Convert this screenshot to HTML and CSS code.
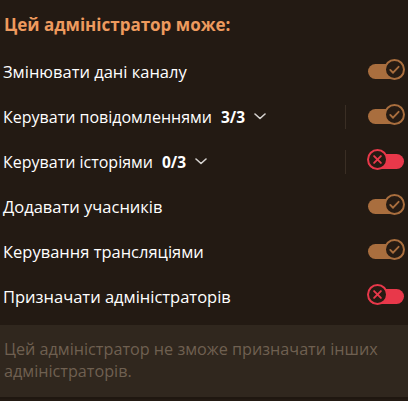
FILE: index.html
```html
<!DOCTYPE html>
<html lang="uk">
<head>
<meta charset="utf-8">
<link rel="stylesheet" href="styles.css">
</head>
<body>
<div class="panel">
  <div class="title">Цей адміністратор може:</div>
  <div class="row">
    <span class="label">Змінювати дані каналу</span>
    <span class="toggle on"><span class="knob"><svg viewBox="0 0 20 20"><path d="M5 10.5l3.3 3.3 6.5-7"/></svg></span></span>
  </div>
  <div class="row">
    <span class="label"><span class="tight">Керувати повідомленнями</span><b class="count">3/3</b><svg class="chev" viewBox="0 0 12 7"><path d="M1 1l5 4.5 5-4.5"/></svg></span>
    <span class="sep"></span>
    <span class="toggle on"><span class="knob"><svg viewBox="0 0 20 20"><path d="M5 10.5l3.3 3.3 6.5-7"/></svg></span></span>
  </div>
  <div class="row">
    <span class="label"><span class="tight">Керувати історіями</span><b class="count">0/3</b><svg class="chev" viewBox="0 0 12 7"><path d="M1 1l5 4.5 5-4.5"/></svg></span>
    <span class="sep"></span>
    <span class="toggle off"><span class="knob"><svg viewBox="0 0 20 20"><path d="M6 6l8 8M14 6l-8 8"/></svg></span></span>
  </div>
  <div class="row">
    <span class="label">Додавати учасників</span>
    <span class="toggle on"><span class="knob"><svg viewBox="0 0 20 20"><path d="M5 10.5l3.3 3.3 6.5-7"/></svg></span></span>
  </div>
  <div class="row">
    <span class="label">Керування трансляціями</span>
    <span class="toggle on"><span class="knob"><svg viewBox="0 0 20 20"><path d="M5 10.5l3.3 3.3 6.5-7"/></svg></span></span>
  </div>
  <div class="row">
    <span class="label">Призначати адміністраторів</span>
    <span class="toggle off"><span class="knob"><svg viewBox="0 0 20 20"><path d="M6 6l8 8M14 6l-8 8"/></svg></span></span>
  </div>
  <div class="note">Цей адміністратор не зможе призначати інших адміністраторів.</div>
</div>
</body>
</html>
```
FILE: styles.css
```css
html, body {
  margin: 0;
  padding: 0;
  background: #231a13;
}
body {
  width: 408px;
  height: 401px;
  overflow: hidden;
  font-family: "Open Sans", "Noto Sans", sans-serif;
  color: #ffffff;
}
.panel {
  display: flex;
  flex-direction: column;
}
.title {
  height: 49px;
  box-sizing: border-box;
  padding: 14px 0 0 4px;
  font-size: 17px;
  font-weight: 700;
  color: #ee9a5e;
  line-height: 22px;
}
.row {
  height: 45px;
  display: flex;
  align-items: center;
  padding: 0 4px 0 3px;
}
.label {
  flex: 1;
  font-size: 16.5px;
  line-height: 22px;
  display: flex;
  align-items: center;
  white-space: nowrap;
}
.tight {
  font-size: 16px;
}
.count {
  font-weight: 700;
  font-size: 15.5px;
  margin-left: 9px;
}
.chev {
  width: 12px;
  height: 7px;
  margin-left: 9px;
  fill: none;
  stroke: #d6d3d0;
  stroke-width: 1.6;
  stroke-linecap: round;
  stroke-linejoin: round;
}
.sep {
  width: 1px;
  height: 24px;
  background: #3a2e24;
  margin-right: 22px;
}
.toggle {
  position: relative;
  width: 36px;
  height: 15px;
  border-radius: 8px;
  display: block;
}
.toggle.on { background: #a96e3e; }
.toggle.off { background: #e8384a; }
.knob {
  position: absolute;
  top: -5px;
  width: 17px;
  height: 17px;
  border-radius: 50%;
  border: 2px solid;
  background: #261b13;
}
.toggle.on .knob { right: -1px; border-color: #a96e3e; }
.toggle.off .knob { left: -1px; border-color: #e8384a; }
.knob svg {
  width: 17px;
  height: 17px;
  display: block;
  fill: none;
  stroke-width: 2.2;
  stroke-linecap: round;
  stroke-linejoin: round;
}
.toggle.on .knob svg { stroke: #a96e3e; }
.toggle.off .knob svg { stroke: #e8384a; }
.note {
  margin-top: 6px;
  height: 74px;
  box-sizing: border-box;
  padding: 13px 6px 0 4px;
  background: #30271e;
  color: #6f6051;
  font-size: 16.2px;
  line-height: 22px;
  border-bottom: 2px solid #1f1710;
}
```
